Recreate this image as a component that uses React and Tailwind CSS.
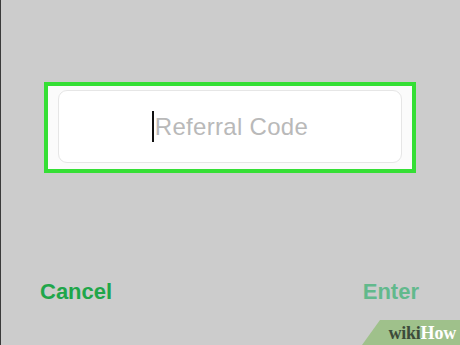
export default function App() {
  return (
    <div className="relative w-[460px] h-[345px] overflow-hidden bg-[#cccccc] border-l border-[#3a3a3a] font-['Liberation_Sans',Arial,sans-serif]">
      <div className="pt-[82px] pl-[43px]">
        {/* highlighted input */}
        <div className="w-[372px] h-[91px] border-[4px] border-[#35df35] bg-[#fbfbfb] px-[10px] py-[4px]">
          <div className="h-[73px] rounded-[9px] border border-[#e6e6e6] bg-white flex items-center justify-center">
            <span className="w-[2px] h-[31px] bg-[#111] mr-[1px]" />
            <span className="text-[24px] text-[#b9b9b9] tracking-[0.3px] leading-none">Referral Code</span>
          </div>
        </div>
      </div>

      <div className="flex justify-between items-center mt-[108px] pl-[39px] pr-[41px]">
        <span className="text-[22px] font-bold text-[#1fa64a] leading-none">Cancel</span>
        <span className="text-[22px] font-bold text-[#62b98c] leading-none">Enter</span>
      </div>

      {/* wikiHow watermark */}
      <div className="absolute right-0 bottom-0 w-[98px] h-[25px] bg-[#9fc18b] [clip-path:polygon(18px_0,100%_0,100%_100%,0_100%)] flex items-center justify-end pr-[4px] pt-[1px]">
        <span className="font-['Liberation_Serif',serif] font-bold text-[18px] leading-none tracking-[-0.2px]">
          <span className="text-[#3c4b3a]">wiki</span>
          <span className="text-white">How</span>
        </span>
      </div>
    </div>
  );
}
